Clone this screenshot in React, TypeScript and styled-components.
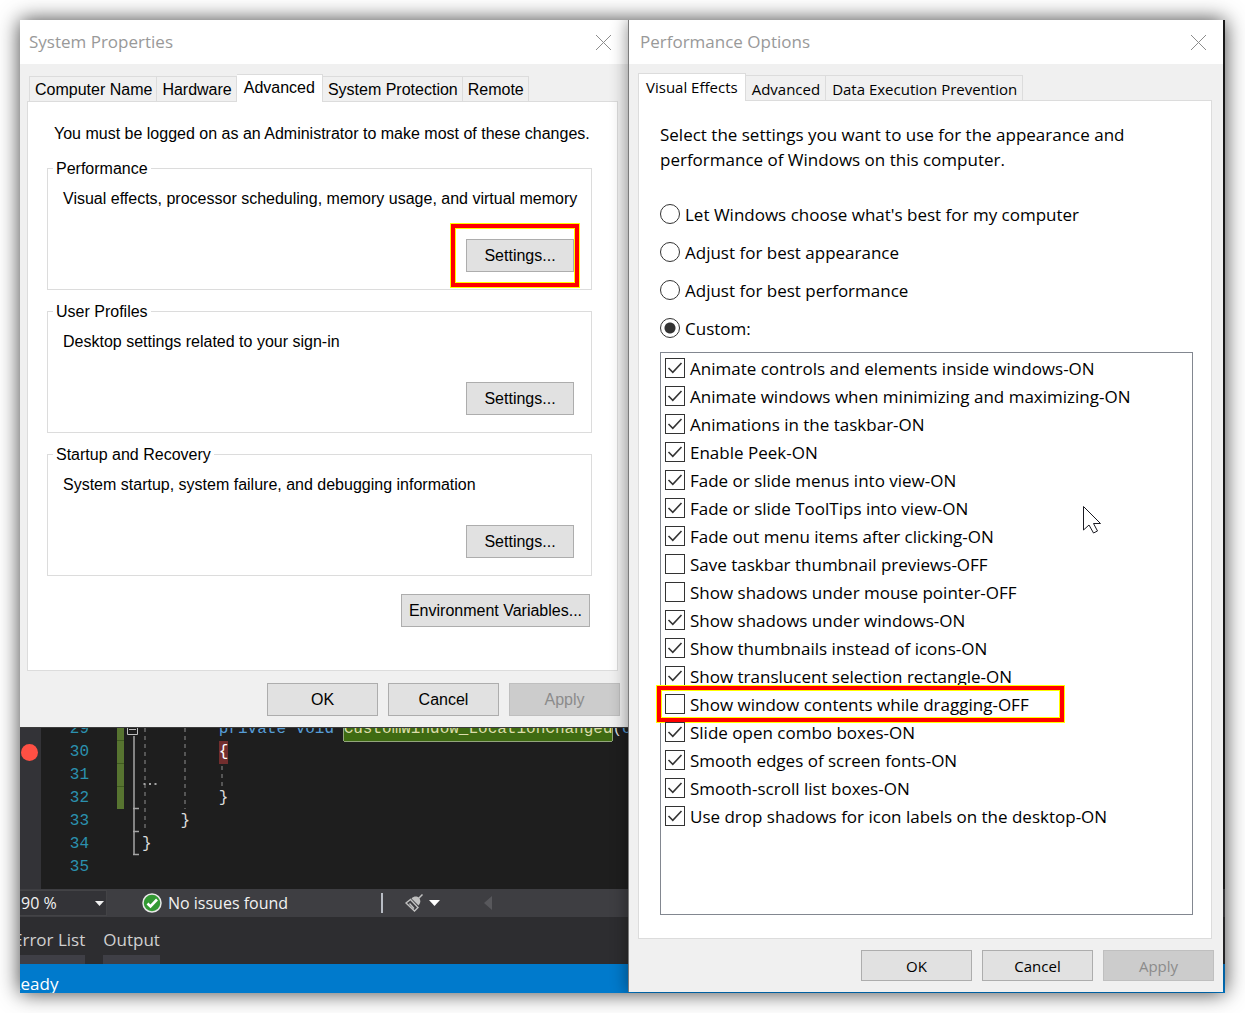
import React, { useState } from "react";
import styled, { createGlobalStyle, css } from "styled-components";

const ui = '"Open Sans", "Noto Sans", sans-serif';
const classic = '"Liberation Sans", Arial, sans-serif';
const mono = '"Liberation Mono", monospace';

const GlobalStyle = createGlobalStyle`
  *, *::before, *::after { box-sizing: border-box; }
  body { margin: 0; background: #fff; color: #000; font-family: ${ui}; }
  button, input, select { font: inherit; color: inherit; margin: 0; }
`;

/* ---------- desktop ---------- */

const Desktop = styled.main`
  display: grid;
  grid-template-columns: 608fr 595fr;
  margin: 20px;
  padding: 0 2px 1px 0;
  overflow: hidden;
  background: linear-gradient(to top, #007acc 29px, #2d2d30 29px 76px, #3e3e42 76px 104px, #1e1e1e 104px);
  box-shadow: 0 0 20px rgba(0, 0, 0, 0.75);
`;

const LeftColumn = styled.div`
  display: flex;
  flex-direction: column;
  min-width: 0;
`;

/* ---------- dialogs ---------- */

const Dialog = styled.section<{ $front?: boolean }>`
  display: flex;
  flex-direction: column;
  min-width: 0;
  background: #f0f0f0;
  font-family: ${(p) => (p.$front ? ui : classic)};
  ${(p) =>
    p.$front &&
    css`
      position: relative;
      border-left: 1px solid #7c7c7c;
      box-shadow: 0 0 16px rgba(0, 0, 0, 0.45);
    `}
`;

const TitleBar = styled.header`
  display: flex;
  align-items: center;
  justify-content: space-between;
  height: 44px;
  padding: 0 16px 0 9px;
  background: #fff;
  color: #999;
  font-family: ${ui};
`;

const Title = styled.h1<{ $indent?: boolean }>`
  margin: 0;
  padding-left: ${(p) => (p.$indent ? 2 : 0)}px;
  font-size: 17px;
  font-weight: 400;
  line-height: 24px;
`;

const CloseButton = styled.button`
  display: flex;
  padding: 0;
  border: 0;
  background: none;
`;

const Body = styled.div<{ $front?: boolean }>`
  display: flex;
  flex: 1;
  flex-direction: column;
  padding: ${(p) => (p.$front ? "10px 11px 0 9px" : "9px 10px 0 7px")};
`;

const TabList = styled.div<{ $inset?: boolean }>`
  display: flex;
  align-items: flex-end;
  height: ${(p) => (p.$inset ? 28 : 26)}px;
  padding-left: ${(p) => (p.$inset ? 2 : 0)}px;
`;

const Tab = styled.button<{ $compact?: boolean }>`
  height: 25px;
  padding: ${(p) => (p.$compact ? "2px 5px 0 6px" : "2px 4px 0 5px")};
  border: 1px solid #dcdcdc;
  border-bottom: 0;
  background: #f0f0f0;
  font-size: ${(p) => (p.$compact ? 15 : 16)}px;
  line-height: 22px;
  white-space: nowrap;

  & + & {
    border-left: 0;
  }

  &[aria-selected="true"] {
    z-index: 1;
    height: 28px;
    margin-bottom: -1px;
    padding: 2px 7px 4px;
    border-left: 1px solid #dcdcdc;
    background: #fff;
  }
`;

const Panel = styled.div<{ $front?: boolean }>`
  display: flex;
  flex-direction: column;
  border: 1px solid #dcdcdc;
  background: #fff;
  padding: ${(p) => (p.$front ? "21px 18px 23px 21px" : "22px 25px 43px 19px")};
`;

const Actions = styled.footer<{ $front?: boolean }>`
  display: flex;
  justify-content: flex-end;
  gap: 10px;
  padding: ${(p) => (p.$front ? "11px 9px 11px 0" : "12px 8px 11px 0")};
`;

const PushButton = styled.button<{ $width?: number; $short?: boolean }>`
  width: ${(p) => p.$width ?? 111}px;
  height: ${(p) => (p.$short ? 31 : 33)}px;
  padding: 0;
  border: 1px solid #adadad;
  background: #e1e1e1;
  font-size: ${(p) => (p.$short ? 15 : 16)}px;
  white-space: nowrap;

  &:disabled {
    border-color: #bfbfbf;
    background: #ccc;
    color: #8b8b8b;
  }
`;

const Highlight = styled.span<{ $inset: string }>`
  position: absolute;
  inset: ${(p) => p.$inset};
  border: 4px solid #f00;
  outline: 1px solid #ff0;
  box-shadow: inset 0 0 0 1px #ff0;
  pointer-events: none;
`;

/* ---------- system properties ---------- */

const Notice = styled.p`
  margin: 0 0 13px;
  padding-left: 7px;
  font-size: 16px;
  line-height: 20px;
  white-space: nowrap;
`;

const Groups = styled.div`
  display: flex;
  flex-direction: column;
  gap: 10px;
  margin-bottom: 18px;
`;

const Group = styled.fieldset`
  min-width: 0;
  margin: 0;
  padding: 10px 17px 17px 15px;
  border: 1px solid #dcdcdc;
  font-size: 16px;
  line-height: 20px;

  legend {
    margin-left: -10px;
    padding: 2px 3px 0;
  }

  p {
    margin: 0 0 30px;
    white-space: nowrap;
  }
`;

const ButtonRow = styled.div<{ $end?: number }>`
  display: flex;
  justify-content: flex-end;
  padding-right: ${(p) => p.$end ?? 0}px;
`;

const Marked = styled.div`
  position: relative;
  display: flex;
`;

/* ---------- performance options ---------- */

const Lead = styled.p`
  max-width: 480px;
  margin: 0 0 29px;
  font-size: 17px;
  line-height: 25px;
`;

const Radios = styled.div`
  display: flex;
  flex-direction: column;
  gap: 12px;
  margin-bottom: 11px;
`;

const Choice = styled.label<{ $tall?: boolean }>`
  position: relative;
  display: flex;
  align-items: center;
  gap: 5px;
  height: ${(p) => (p.$tall ? 28 : 26)}px;
  font-size: 17px;
  white-space: nowrap;
`;

const Radio = styled.input`
  appearance: none;
  width: 20px;
  height: 20px;
  border: 1px solid #333;
  border-radius: 50%;
  background: #fff;

  &:checked {
    background: radial-gradient(circle, #333 5px, #fff 6px);
  }
`;

const CheckBox = styled.span`
  display: grid;
  width: 20px;
  height: 20px;

  input,
  svg {
    grid-area: 1 / 1;
  }

  input {
    appearance: none;
    width: 20px;
    height: 20px;
    border: 1px solid #333;
    background: #fff;
  }

  svg {
    z-index: 1;
    pointer-events: none;
  }
`;

const ListBox = styled.div`
  position: relative;
  min-height: 563px;
  padding: 1px 4px;
  border: 1px solid #828790;
`;

const Pointer = styled.svg`
  position: absolute;
  top: 152px;
  left: 421px;
`;

/* ---------- editor behind the dialogs ---------- */

const Ide = styled.div`
  display: flex;
  flex: 1;
  flex-direction: column;
  overflow: hidden;
  border-top: 1px solid #3c3c3c;
  margin-bottom: -1px;
  color: #f1f1f1;
`;

const Editor = styled.div`
  position: relative;
  flex: 1;
  overflow: hidden;
  background: linear-gradient(to right, #333337 21px, #1e1e1e 21px);
`;

const CodeLines = styled.div`
  margin-top: -10px;
  font-family: ${mono};
  font-size: 16px;
  line-height: 23px;
`;

const CodeLine = styled.div`
  display: grid;
  grid-template-columns: 21px 48px 53px 1fr;
  height: 23px;
  white-space: pre;
`;

const Breakpoint = styled.span`
  align-self: center;
  width: 17px;
  height: 17px;
  margin-left: 1px;
  border-radius: 50%;
  background: #ff5044;
`;

const LineNumber = styled.span`
  grid-column: 2;
  color: #2b91af;
  text-align: right;
`;

const Code = styled.code`
  grid-column: 4;
  font: inherit;
  color: #dcdcdc;
`;

const Keyword = styled.span`
  color: #569cd6;
`;

const Symbol = styled.mark`
  display: inline-block;
  height: 23px;
  background: #3f6b12;
  color: #dcdcaa;
  box-shadow: 0 1px 0 #93a67c, 1px 0 0 #93a67c, -1px 0 0 #93a67c;
`;

const BraceMark = styled.mark`
  display: inline-block;
  height: 23px;
  background: #722e2e;
  color: #fff;
`;

const Outline = styled.svg`
  position: absolute;
  top: 0;
  left: 96px;
`;

const EditorStatus = styled.div`
  display: flex;
  align-items: center;
  height: 28px;
  background: #3e3e42;
  font-size: 17px;
`;

const Zoom = styled.label`
  display: grid;
  align-items: center;
  width: 87px;
  height: 26px;
  margin-right: 35px;
  background: #333337;

  select,
  svg {
    grid-area: 1 / 1;
  }

  select {
    appearance: none;
    width: 100%;
    height: 26px;
    padding: 0 1px;
    border: 1px solid #434346;
    border-left: 0;
    background: transparent;
    font-size: 16px;
  }

  svg {
    justify-self: end;
    margin-right: 3px;
    pointer-events: none;
  }
`;

const Issues = styled.span`
  display: flex;
  align-items: center;
  gap: 6px;
  width: 239px;
  font-size: 16px;
`;

const Divider = styled.span`
  width: 2px;
  height: 20px;
  margin-right: 22px;
  background: #b8bcc4;
`;

const IconButton = styled.button`
  display: flex;
  align-items: center;
  gap: 6px;
  margin-right: 44px;
  padding: 0;
  border: 0;
  background: none;
`;

const ToolTabs = styled.nav`
  display: flex;
  gap: 18px;
  height: 47px;
  margin-left: -7px;
  padding-top: 15px;
  background: #2d2d30;
`;

const ToolTab = styled.button`
  padding: 0 0 7px;
  border: 0;
  border-bottom: 9px solid #3f3f46;
  background: none;
  color: #d0d0d0;
  font-size: 17px;
  line-height: 16px;
  overflow: visible;
`;

const StatusBar = styled.div`
  height: 29px;
  margin-left: -10px;
  padding-top: 8px;
  background: #007acc;
  color: #fff;
  font-size: 17px;
  line-height: 24px;
`;

const CloseIcon = () => (
  <svg width="17" height="17" viewBox="0 0 17 17" fill="none" stroke="#8c8c8c" aria-hidden="true">
    <path d="M1 1l15 15M16 1L1 16" />
  </svg>
);

const CheckMark = () => (
  <svg width="20" height="20" viewBox="0 0 20 20" fill="none" stroke="#333" strokeWidth="1.6" aria-hidden="true">
    <path d="M3.5 10l4.3 4.3L16.5 5" />
  </svg>
);

const Down = () => (
  <svg width="11" height="6" viewBox="0 0 11 6" fill="#fff" aria-hidden="true">
    <path d="M0 0h11L5.5 6z" />
  </svg>
);

type GroupData = { title: string; text: string; marked?: boolean };

const groups: GroupData[] = [
  { title: "Performance", text: "Visual effects, processor scheduling, memory usage, and virtual memory", marked: true },
  { title: "User Profiles", text: "Desktop settings related to your sign-in" },
  { title: "Startup and Recovery", text: "System startup, system failure, and debugging information" },
];

const modes = [
  "Let Windows choose what's best for my computer",
  "Adjust for best appearance",
  "Adjust for best performance",
  "Custom:",
];

const effects: { label: string; on: boolean; marked?: boolean }[] = [
  { label: "Animate controls and elements inside windows-ON", on: true },
  { label: "Animate windows when minimizing and maximizing-ON", on: true },
  { label: "Animations in the taskbar-ON", on: true },
  { label: "Enable Peek-ON", on: true },
  { label: "Fade or slide menus into view-ON", on: true },
  { label: "Fade or slide ToolTips into view-ON", on: true },
  { label: "Fade out menu items after clicking-ON", on: true },
  { label: "Save taskbar thumbnail previews-OFF", on: false },
  { label: "Show shadows under mouse pointer-OFF", on: false },
  { label: "Show shadows under windows-ON", on: true },
  { label: "Show thumbnails instead of icons-ON", on: true },
  { label: "Show translucent selection rectangle-ON", on: true },
  { label: "Show window contents while dragging-OFF", on: false, marked: true },
  { label: "Slide open combo boxes-ON", on: true },
  { label: "Smooth edges of screen fonts-ON", on: true },
  { label: "Smooth-scroll list boxes-ON", on: true },
  { label: "Use drop shadows for icon labels on the desktop-ON", on: true },
];

function Tabs({ names, active, front }: { names: string[]; active: string; front?: boolean }) {
  return (
    <TabList role="tablist" $inset={!front}>
      {names.map((name) => (
        <Tab key={name} type="button" role="tab" aria-selected={name === active} $compact={front}>
          {name}
        </Tab>
      ))}
    </TabList>
  );
}

function SystemProperties() {
  return (
    <Dialog aria-label="System Properties">
      <TitleBar>
        <Title>System Properties</Title>
        <CloseButton type="button" aria-label="Close">
          <CloseIcon />
        </CloseButton>
      </TitleBar>
      <Body>
        <Tabs names={["Computer Name", "Hardware", "Advanced", "System Protection", "Remote"]} active="Advanced" />
        <Panel role="tabpanel">
          <Notice>You must be logged on as an Administrator to make most of these changes.</Notice>
          <Groups>
            {groups.map((g) => (
              <Group key={g.title}>
                <legend>{g.title}</legend>
                <p>{g.text}</p>
                <ButtonRow>
                  <Marked>
                    <PushButton type="button" $width={108}>
                      Settings...
                    </PushButton>
                    {g.marked && <Highlight $inset="-15px -5px -15px -15px" />}
                  </Marked>
                </ButtonRow>
              </Group>
            ))}
          </Groups>
          <ButtonRow $end={2}>
            <PushButton type="button" $width={189}>
              Environment Variables...
            </PushButton>
          </ButtonRow>
        </Panel>
      </Body>
      <Actions>
        <PushButton type="button">OK</PushButton>
        <PushButton type="button">Cancel</PushButton>
        <PushButton type="button" disabled>
          Apply
        </PushButton>
      </Actions>
    </Dialog>
  );
}

function PerformanceOptions() {
  const [mode, setMode] = useState("Custom:");
  const [state, setState] = useState(effects.map((e) => e.on));
  const toggle = (i: number) => setState((s) => s.map((v, n) => (n === i ? !v : v)));

  return (
    <Dialog $front aria-label="Performance Options">
      <TitleBar>
        <Title $indent>Performance Options</Title>
        <CloseButton type="button" aria-label="Close">
          <CloseIcon />
        </CloseButton>
      </TitleBar>
      <Body $front>
        <Tabs front names={["Visual Effects", "Advanced", "Data Execution Prevention"]} active="Visual Effects" />
        <Panel $front role="tabpanel">
          <Lead>Select the settings you want to use for the appearance and performance of Windows on this computer.</Lead>
          <Radios role="radiogroup">
            {modes.map((m) => (
              <Choice key={m}>
                <Radio type="radio" name="mode" checked={mode === m} onChange={() => setMode(m)} />
                {m}
              </Choice>
            ))}
          </Radios>
          <ListBox>
            {effects.map((e, i) => (
              <Choice key={e.label} $tall>
                <CheckBox>
                  <input type="checkbox" checked={state[i]} onChange={() => toggle(i)} />
                  {state[i] && <CheckMark />}
                </CheckBox>
                {e.label}
                {e.marked && <Highlight $inset="-4px 124px -4px -8px" />}
              </Choice>
            ))}
            <Pointer width="20" height="29" viewBox="0 0 20 29" fill="#fff" stroke="#1a1a22" aria-hidden="true">
              <path d="M1.500 1.500V25l5.500-5 4.500 8 4-2-4-7.500H18.500z" />
            </Pointer>
          </ListBox>
        </Panel>
      </Body>
      <Actions $front>
        <PushButton type="button" $short>
          OK
        </PushButton>
        <PushButton type="button" $short>
          Cancel
        </PushButton>
        <PushButton type="button" $short disabled>
          Apply
        </PushButton>
      </Actions>
    </Dialog>
  );
}

function CodeEditor() {
  return (
    <Ide>
      <Editor>
        <CodeLines>
          <CodeLine>
            <LineNumber>29</LineNumber>
            <Code>
              {"        "}
              <Keyword>private void</Keyword> <Symbol>CustomWindow_LocationChanged</Symbol>(<Keyword>o</Keyword>
            </Code>
          </CodeLine>
          <CodeLine>
            <Breakpoint />
            <LineNumber>30</LineNumber>
            <Code>
              {"        "}
              <BraceMark>{"{"}</BraceMark>
            </Code>
          </CodeLine>
          <CodeLine>
            <LineNumber>31</LineNumber>
          </CodeLine>
          <CodeLine>
            <LineNumber>32</LineNumber>
            <Code>{"        }"}</Code>
          </CodeLine>
          <CodeLine>
            <LineNumber>33</LineNumber>
            <Code>{"    }"}</Code>
          </CodeLine>
          <CodeLine>
            <LineNumber>34</LineNumber>
            <Code>{"}"}</Code>
          </CodeLine>
          <CodeLine>
            <LineNumber>35</LineNumber>
          </CodeLine>
        </CodeLines>
        <Outline width="112" height="130" viewBox="0 0 112 130" fill="none" aria-hidden="true">
          <path d="M1 0h7v81H1z" fill="#577430" />
          <path d="M1 12.500h7M1 35.500h7M1 58.500h7" stroke="#3f5a20" />
          <path d="M11.500 -2v8.500h10V-2M13 1.500h7" stroke="#c0c0c0" />
          <path d="M18 8v118M17 80.500h6M17 103.500h6M17 126.500h6" stroke="#a5a5a5" strokeWidth="1.500" />
          <path d="M29 0v104M69 0v81M106 38v22" stroke="#6a6a6a" strokeWidth="1.500" strokeDasharray="4 4" />
          <path d="M27.500 56h2M33 56h2M38.500 56h2" stroke="#a5a5a5" strokeWidth="2" />
        </Outline>
      </Editor>
      <EditorStatus>
        <Zoom>
          <select aria-label="Zoom" defaultValue="90 %">
            <option>90 %</option>
          </select>
          <svg width="9" height="5" viewBox="0 0 9 5" fill="#f1f1f1" aria-hidden="true">
            <path d="M0 0h9L4.500 5z" />
          </svg>
        </Zoom>
        <Issues>
          <svg width="20" height="20" viewBox="0 0 20 20" fill="none" aria-hidden="true">
            <circle cx="10" cy="10" r="9" fill="#339933" stroke="#e8e8e8" strokeWidth="1.500" />
            <path d="M5.500 10.500l3 3L15 6.500" stroke="#fff" strokeWidth="2.600" />
          </svg>
          No issues found
        </Issues>
        <Divider />
        <IconButton type="button" aria-label="Code cleanup">
          <svg width="18" height="18" viewBox="0 0 18 18" fill="none" stroke="#c0c0c0" aria-hidden="true">
            <path d="M1 9l4.500-3.500 7.500 8L9.500 17zM4.500 9.500l4.500 5" strokeWidth="1.400" />
            <path d="M6.500 4.500C9 2 12 2 14 4s1.800 5-.5 7.500z" fill="#c0c0c0" stroke="none" />
            <path d="M13.500 4.500l4-4" strokeWidth="1.500" />
          </svg>
          <Down />
        </IconButton>
        <svg width="8" height="14" viewBox="0 0 8 14" fill="#58585c" aria-hidden="true">
          <path d="M8 0v14L0 7z" />
        </svg>
      </EditorStatus>
      <ToolTabs>
        <ToolTab type="button">Error List</ToolTab>
        <ToolTab type="button">Output</ToolTab>
      </ToolTabs>
      <StatusBar>Ready</StatusBar>
    </Ide>
  );
}

export default function App() {
  return (
    <>
      <GlobalStyle />
      <Desktop>
        <LeftColumn>
          <SystemProperties />
          <CodeEditor />
        </LeftColumn>
        <PerformanceOptions />
      </Desktop>
    </>
  );
}
